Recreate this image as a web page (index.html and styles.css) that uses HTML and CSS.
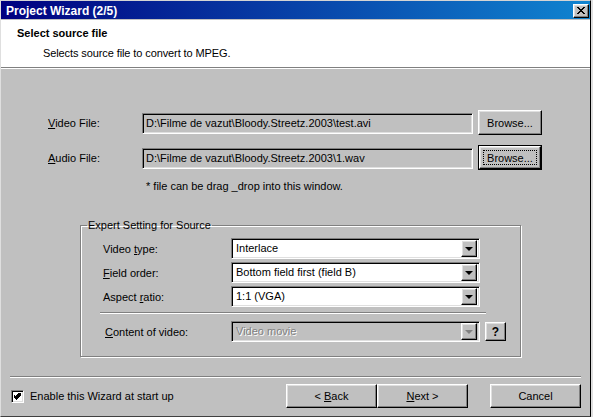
FILE: index.html
```html
<!DOCTYPE html>
<html>
<head>
<meta charset="utf-8">
<link rel="stylesheet" href="styles.css">
</head>
<body>
<div class="window">
  <div class="titlebar">
    <span class="title">Project Wizard (2/5)</span>
    <span class="close raised">
      <svg width="8" height="7" viewBox="0 0 8 7"><path d="M0 0h2v1h1v1h2v-1h1v-1h2v1h-1v1h-1v1h-1v1h1v1h1v1h1v1h-2v-1h-1v-1h-2v1h-1v1h-2v-1h1v-1h1v-1h1v-1h-1v-1h-1v-1h-1z" fill="#000"/></svg>
    </span>
  </div>
  <div class="header">
    <div class="h-title">Select source file</div>
    <div class="h-sub">Selects source file to convert to MPEG.</div>
  </div>
  <div class="content">
    <div class="files">
      <div class="file-row">
        <span class="lbl"><u>V</u>ideo File:</span>
        <div class="textbox sunken">D:\Filme de vazut\Bloody.Streetz.2003\test.avi</div>
        <span class="btn raised browse">Browse...</span>
      </div>
      <div class="file-row">
        <span class="lbl"><u>A</u>udio File:</span>
        <div class="textbox sunken">D:\Filme de vazut\Bloody.Streetz.2003\1.wav</div>
        <span class="btn default browse"><span class="btn-in raised"><span class="focus">Browse...</span></span></span>
      </div>
      <div class="note">* file can be drag _drop into this window.</div>
    </div>
    <fieldset class="group">
      <legend>Expert Setting for Source</legend>
      <div class="combo-row">
        <span class="clbl">Video <u>t</u>ype:</span>
        <div class="combo sunken"><span class="ctext">Interlace</span><span class="arrow raised"><i class="tri"></i></span></div>
      </div>
      <div class="combo-row">
        <span class="clbl"><u>F</u>ield order:</span>
        <div class="combo sunken"><span class="ctext">Bottom field first (field B)</span><span class="arrow raised"><i class="tri"></i></span></div>
      </div>
      <div class="combo-row">
        <span class="clbl">Aspect <u>r</u>atio:</span>
        <div class="combo sunken"><span class="ctext">1:1 (VGA)</span><span class="arrow raised"><i class="tri"></i></span></div>
      </div>
      <div class="etched"></div>
      <div class="combo-row last">
        <span class="clbl content-lbl"><u>C</u>ontent of video:</span>
        <div class="combo sunken disabled"><span class="ctext">Video movie</span><span class="arrow raised"><i class="tri"></i></span></div>
        <span class="help raised">?</span>
      </div>
    </fieldset>
    <div class="footer">
      <div class="etched wide"></div>
      <div class="footer-row">
        <div class="check-wrap">
          <span class="checkbox sunken">
            <svg width="7" height="7" viewBox="0 0 7 7"><path d="M6 0h1v3h-1v1h-1v1h-1v1h-1v1h-1v-1h-1v-1h-1v-1h-1v-3h1v1h1v1h1v-1h1v-1h1v-1h1z" fill="#000"/></svg>
          </span>
          <span class="check-lbl">Enable this Wizard at start up</span>
        </div>
        <div class="nav">
          <span class="btn raised nav-btn">&lt;&nbsp; <u>B</u>ack</span>
          <span class="btn raised nav-btn"><u>N</u>ext &gt;</span>
          <span class="btn raised nav-btn cancel">Cancel</span>
        </div>
      </div>
    </div>
  </div>
</div>
</body>
</html>
```
FILE: styles.css
```css
* { box-sizing: border-box; }
html, body { margin: 0; padding: 0; }
body {
  background: #dfdfdf;
  font-family: "Liberation Sans", Arial, sans-serif;
  font-size: 11px;
  color: #000;
}
.window {
  width: 591px;
  height: 417px;
  background: #c0c0c0;
  border-top: 1px solid #d4d4d4;
  border-left: 1px solid #dfdfdf;
  border-right: 1px solid #000;
  border-bottom: 1px solid #404040;
  display: flex;
  flex-direction: column;
}
.raised {
  border: 1px solid;
  border-color: #fff #000 #000 #fff;
  box-shadow: inset -1px -1px 0 #808080, inset 1px 1px 0 #dfdfdf;
  background: #c0c0c0;
}
.sunken {
  border: 1px solid;
  border-color: #808080 #fff #fff #808080;
  box-shadow: inset 1px 1px 0 #000, inset -1px -1px 0 #dfdfdf;
}
.titlebar {
  height: 18px;
  margin-bottom: 1px;
  background: linear-gradient(90deg, #000080, #1084d0);
  display: flex;
  align-items: center;
  justify-content: space-between;
  padding: 0 1px 0 5px;
}
.title {
  color: #fff;
  font-weight: bold;
  font-size: 12px;
  line-height: 14px;
  margin-top: 1px;
}
.close {
  width: 16px;
  height: 14px;
  display: flex;
  align-items: center;
  justify-content: center;
  margin-top: 1px;
}
.header {
  height: 48px;
  background: #fff;
  border-bottom: 1px solid #808080;
  box-shadow: 0 1px 0 #fff;
  margin-bottom: 1px;
  padding-top: 7px;
}
.h-title {
  font-weight: bold;
  margin-left: 16px;
  line-height: 13px;
}
.h-sub {
  margin-left: 42px;
  margin-top: 7px;
  line-height: 13px;
  letter-spacing: -0.1px;
}
.content {
  flex: 1;
  display: flex;
  flex-direction: column;
}
.files {
  margin-left: 47px;
  padding-top: 41px;
}
.file-row {
  display: flex;
  align-items: center;
  height: 25px;
  margin-bottom: 10px;
}
.lbl { width: 94px; }
.textbox {
  width: 331px;
  height: 21px;
  margin-top: 1px;
  padding: 0 3px;
  line-height: 19px;
  background: #c0c0c0;
  white-space: nowrap;
  overflow: hidden;
}
.btn {
  display: flex;
  align-items: center;
  justify-content: center;
}
.browse {
  width: 64px;
  height: 25px;
  margin-left: 5px;
}
.default {
  border: 1px solid #000;
  padding: 0;
}
.btn-in {
  width: 100%;
  height: 100%;
  display: flex;
  align-items: center;
  justify-content: center;
}
.focus {
  border: 1px dotted #000;
  width: 54px;
  height: 15px;
  display: flex;
  align-items: center;
  justify-content: center;
}
.note {
  margin-left: 98px;
  margin-top: 1px;
  line-height: 13px;
}
.group {
  margin: 26px 0 0 79px;
  width: 441px;
  height: 138px;
  border: 1px solid #808080;
  box-shadow: inset 1px 1px 0 #fff, 1px 1px 0 #fff;
  padding: 6px 0 0 22px;
}
.group legend {
  padding: 0 1px;
  margin-left: -16px;
  line-height: 13px;
}
.combo-row {
  display: flex;
  align-items: center;
  height: 21px;
  margin-bottom: 3px;
}
.clbl { width: 128px; }
.combo {
  width: 249px;
  height: 21px;
  background: #fff;
  display: flex;
  align-items: center;
  justify-content: space-between;
  padding: 2px;
}
.ctext { padding-left: 2px; line-height: 15px; }
.arrow {
  width: 16px;
  height: 17px;
  display: flex;
  align-items: center;
  justify-content: center;
}
.tri {
  width: 0;
  height: 0;
  border-left: 4px solid transparent;
  border-right: 4px solid transparent;
  border-top: 4px solid #000;
}
.disabled { background: #c0c0c0; }
.disabled .ctext { color: #808080; text-shadow: 1px 1px 0 #fff; }
.disabled .tri { border-top-color: #808080; }
.etched {
  height: 2px;
  border-top: 1px solid #808080;
  border-bottom: 1px solid #fff;
  width: 386px;
  margin: 5px 0 7px -3px;
}
.combo-row.last { margin-bottom: 0; }
.content-lbl { padding-left: 2px; }
.help {
  width: 21px;
  height: 19px;
  margin-left: 5px;
  display: flex;
  align-items: center;
  justify-content: center;
  font-weight: bold;
  font-size: 12px;
}
.footer {
  margin-top: auto;
  padding: 0 0 8px 9px;
}
.etched.wide {
  width: 571px;
  margin: 0 0 6px 0;
}
.footer-row {
  display: flex;
  align-items: center;
  justify-content: space-between;
  width: 571px;
}
.check-wrap {
  display: flex;
  align-items: center;
  padding-left: 1px;
}
.checkbox {
  width: 13px;
  height: 13px;
  background: #fff;
  display: flex;
  align-items: center;
  justify-content: center;
}
.check-lbl { margin-left: 6px; }
.nav { display: flex; }
.nav-btn {
  width: 91px;
  height: 24px;
}
.nav-btn.cancel { margin-left: 22px; }
```
